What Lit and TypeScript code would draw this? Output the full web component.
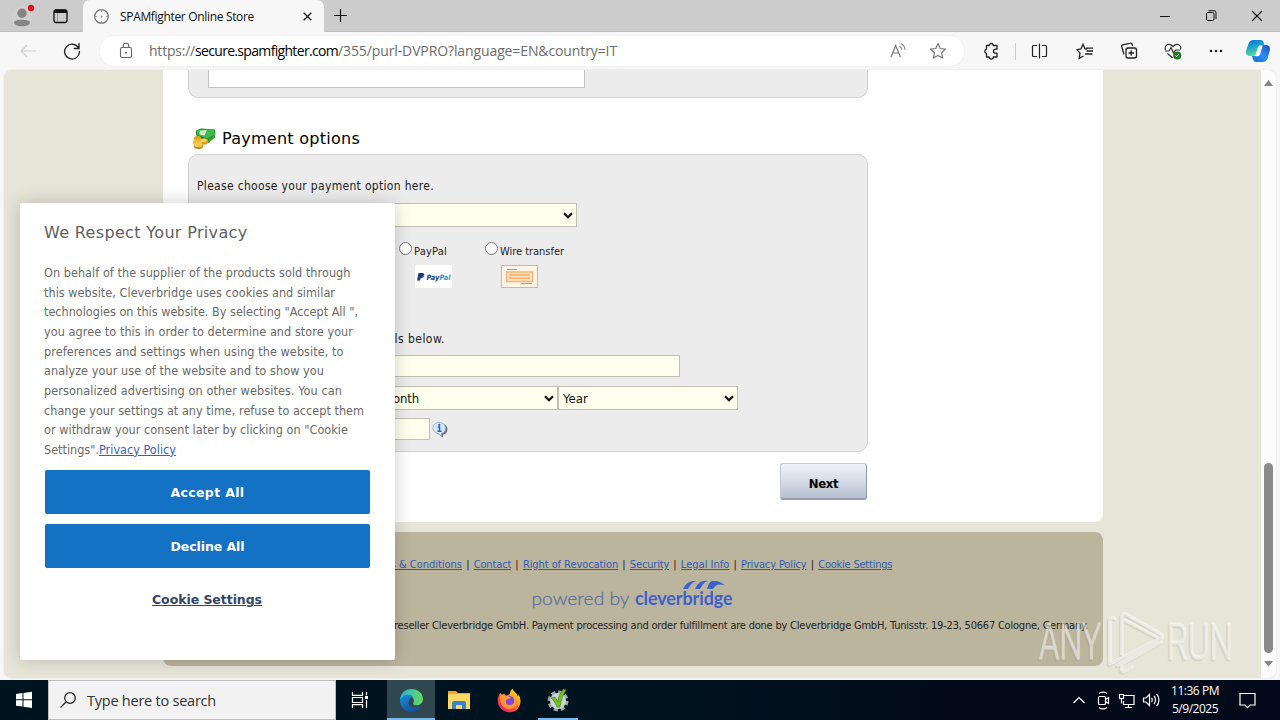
import { LitElement, html, css, svg } from "lit";
import { customElement, property } from "lit/decorators.js";

/** Single line of text whose tracking is adjusted to fill a given width. */
@customElement("fit-text")
class FitText extends LitElement {
  static styles = css`
    :host { display: inline-block; white-space: pre; flex: none; }
    .run { display: inline-block; }
    :host(.link) .run, :host(.under) .run { text-decoration: underline; }
  `;
  @property({ type: Number }) w = 0;
  @property() text = "";
  render() {
    return html`<span class="run">${this.text}</span>`;
  }
  updated() {
    const run = this.renderRoot.querySelector(".run") as HTMLElement;
    run.style.letterSpacing = "0px";
    const natural = run.getBoundingClientRect().width;
    run.style.letterSpacing = `${(this.w - natural) / this.text.length}px`;
    this.style.width = `${this.w}px`;
  }
}

const fit = (text: string, w: number, cls = "") => html`<fit-text class=${cls} .text=${text} .w=${w}></fit-text>`;

const chevron = html`<svg class="chev" width="10" height="7" viewBox="0 0 10 7"><path d="M1 1.2 5 5.2 9 1.2" fill="none" stroke="#111" stroke-width="2.200"/></svg>`;

@customElement("browser-chrome")
class BrowserChrome extends LitElement {
  static styles = css`
    :host { display: block; flex: none; background: #f7f7f7; font-family: "Open Sans", sans-serif; }
    svg { display: block; flex: none; }
    .tabs { display: flex; height: 32px; background: #ccc; }
    .lead { width: 83px; display: flex; box-sizing: border-box; padding-left: 10px; border-bottom: 1px solid #bdbdbd; border-bottom-right-radius: 4px; }
    .tab { width: 241px; height: 32px; box-sizing: border-box; background: #f7f7f7; border-radius: 7px 7px 0 0; display: flex; align-items: center; padding-left: 10px; font-size: 12px; color: #111; }
    .title { margin-left: 10px; width: 183px; }
    .rest { flex: 1; display: flex; border-bottom: 1px solid #bdbdbd; border-bottom-left-radius: 4px; box-sizing: border-box; }
    .plus { margin: 8px 0 0 9px; }
    .win { margin-left: auto; display: flex; gap: 30px; padding: 8px 15px 0 0; }
    .bar { height: 38px; display: flex; align-items: center; }
    .back { margin-left: 19px; }
    .reload { margin-left: 26px; }
    .pill { margin-left: 19px; width: 864px; height: 30px; border-radius: 15px; background: #fff; display: flex; align-items: center; color: #6c6c6c; font-size: 14px; box-shadow: 0 0 3px #ececec; }
    .lock { margin-left: 18px; }
    .url { margin-left: 15px; display: flex; align-items: center; width: 468px; line-height: 20px; }
    .host { color: #000; }
    .read { margin-left: 273px; }
    .star { margin-left: 22px; }
    .tools { margin-left: 19px; display: flex; align-items: center; }
    .sep { width: 1px; height: 17px; background: #ccc; margin: 0 15px; }
    .gap { margin-left: 26px; }
    .gap.first { margin-left: 28px; }
    .copilot { margin-left: 21px; }
  `;
  render() {
    return html`
      <div class="tabs">
        <div class="lead">
          <svg width="62" height="31" viewBox="0 0 62 31">
            <circle cx="12" cy="16" r="10.500" fill="#d2d0ce"/>
            <circle cx="12" cy="13.300" r="4.700" fill="#858585"/>
            <path d="M4 22.300c0-3.500 16-3.500 16 0 0 5.300-16 5.300-16 0Z" fill="#858585"/>
            <circle cx="21" cy="8" r="3.200" fill="#e3111b"/>
            <rect x="44" y="10" width="13" height="12.500" rx="2.200" fill="none" stroke="#111" stroke-width="1.300"/>
            <path d="M44 11.500a2 2 0 0 1 2-2h9a2 2 0 0 1 2 2V13H44Z" fill="#111"/>
            <path d="M47.500 13v9" stroke="#888" stroke-width=".7"/>
          </svg>
        </div>
        <div class="tab">
          <svg width="17" height="17" viewBox="0 0 17 17"><circle cx="8.500" cy="8.500" r="6.800" fill="#fafafa" stroke="#777" stroke-width="1.300"/><path d="M8.500 1v3M8.500 13v3M1 8.500h3M13 8.500h3" stroke="#999"/><circle cx="8.500" cy="8.500" r="1" fill="#888"/></svg>
          <div class="title">${fit("SPAMfighter Online Store", 134)}</div>
          <svg width="9" height="9" viewBox="0 0 9 9"><path d="m.7.7 7.600 7.600M8.300.7.700 8.300" stroke="#111" stroke-width="1.300"/></svg>
        </div>
        <div class="rest">
          <svg class="plus" width="15" height="15" viewBox="0 0 15 15"><path d="M7.500 1v13M1 7.500h13" stroke="#111" stroke-width="1.200"/></svg>
          <div class="win">
            <svg width="16" height="16" viewBox="0 0 16 16"><path d="M3 8.500h10" stroke="#111"/></svg>
            <svg width="16" height="16" viewBox="0 0 16 16"><rect x="3.500" y="4.500" width="7.500" height="8" rx="1.500" fill="none" stroke="#111"/><path d="M5.500 2.700H11a2 2 0 0 1 2 2V11" fill="none" stroke="#111"/></svg>
            <svg width="16" height="16" viewBox="0 0 16 16"><path d="m3 3 10 10M13 3 3 13" stroke="#111" stroke-width="1.100"/></svg>
          </div>
        </div>
      </div>
      <div class="bar">
        <svg class="back" width="18" height="14" viewBox="0 0 18 14"><path d="M17 7H2M8 1 2 7l6 6" fill="none" stroke="#cdcdcd" stroke-width="1.200"/></svg>
        <svg class="reload" width="18" height="18" viewBox="0 0 18 18"><path d="M15.600 6.200A7.400 7.400 0 1 0 16.400 9M16 1v5.500h-5.300" fill="none" stroke="#222" stroke-width="1.300"/></svg>
        <div class="pill">
          <svg class="lock" width="16" height="18" viewBox="0 0 16 18"><rect x="2.500" y="5.500" width="11" height="10" rx="1.500" fill="none" stroke="#666" stroke-width="1.100"/><path d="M5.200 5.500V4a2.800 2.800 0 0 1 5.600 0v1.500" fill="none" stroke="#666" stroke-width="1.100"/><circle cx="8" cy="10.700" r="1" fill="#555"/></svg>
          <div class="url">${fit("https://", 46)}${fit("secure.spamfighter.com", 143, "host")}${fit("/355/purl-DVPRO?language=EN&country=IT", 279)}</div>
          <svg class="read" width="17" height="16" viewBox="0 0 17 16"><path d="M1 14 5.700 2.500 10.400 14M2.700 10h6" fill="none" stroke="#777" stroke-width="1.200"/><path d="M9.500 3.200c1.600.8 2.200 2 2.200 3.600M11 .8c2.700 1.300 4 3.200 4 6" fill="none" stroke="#777" stroke-width="1.100"/></svg>
          <svg class="star" width="18" height="18" viewBox="0 0 18 18"><path d="m9 1.600 2.200 4.900 5.300.6-3.900 3.600 1 5.300L9 13.400 4.400 16l1-5.300-3.900-3.600 5.300-.6Z" fill="none" stroke="#777" stroke-width="1.200" stroke-linejoin="round"/></svg>
        </div>
        <div class="tools">
          <svg width="17" height="18" viewBox="0 0 17 18"><path d="M6.200 3.500a2 2 0 0 1 4 0H14v3.700h-1.500a2 2 0 0 0 0 4H14V15h-3.700a2 2 0 0 1-4.200 0H3.500v-3.600a2.200 2.200 0 0 1 0-4.300V3.500Z" fill="none" stroke="#222" stroke-width="1.300" stroke-linejoin="round"/></svg>
          <div class="sep"></div>
          <svg width="17" height="16" viewBox="0 0 17 16"><path d="M6 2.500H2.500a1 1 0 0 0-1 1v9a1 1 0 0 0 1 1H6M11 2.500h3.500a1 1 0 0 1 1 1v9a1 1 0 0 1-1 1H11M8.500.500v15" fill="none" stroke="#222" stroke-width="1.200"/></svg>
          <svg class="gap first" width="18" height="17" viewBox="0 0 18 17"><path d="M11.200 6.200 9 6 7 1.300 4.900 6 1 6.700l3 3.400-.8 5.200L7.500 13M10.500 8H17M10 5.200h7M9 11h7.500" fill="none" stroke="#222" stroke-width="1.300"/></svg>
          <svg class="gap" width="18" height="18" viewBox="0 0 18 18"><rect x="6" y="6" width="10.500" height="10" rx="2" fill="none" stroke="#222" stroke-width="1.300"/><path d="M11.200 8.300v5.500M8.500 11H14M4 12.500 1.800 4.800a1.500 1.500 0 0 1 1-2l7.500-1.600a1.500 1.500 0 0 1 1.800 1l.5 2" fill="none" stroke="#222" stroke-width="1.300"/></svg>
          <svg class="gap" width="18" height="18" viewBox="0 0 18 18"><path d="M1.500 8C.500 5 2 2.300 5 2.300c2 0 3 1 4 2.200 1-1.200 2-2.200 4-2.200 3 0 4.500 2.700 3.500 5.200M3.500 11.500 8.500 16M1 9h4l2-3.500 2.500 5.500L11.500 8H16" fill="none" stroke="#333" stroke-width="1.200"/><circle cx="13.200" cy="13.400" r="4" fill="#1d7a1d"/><path d="m11.500 13.500 1.200 1.200 2.200-2.700" fill="none" stroke="#fff"/></svg>
          <svg class="gap" width="16" height="16" viewBox="0 0 16 16"><circle cx="3" cy="8" r="1.300" fill="#222"/><circle cx="8" cy="8" r="1.300" fill="#222"/><circle cx="13" cy="8" r="1.300" fill="#222"/></svg>
          <svg class="copilot" width="26" height="24" viewBox="0 0 26 24">
            <defs><linearGradient id="a" x1="0" y1="0" x2=".3" y2="1"><stop offset="0" stop-color="#0b6fd0"/><stop offset=".5" stop-color="#1aa6cf"/><stop offset="1" stop-color="#5fdc90"/></linearGradient><linearGradient id="b" x1="1" y1="0" x2="0" y2="1"><stop offset="0" stop-color="#1c50b8"/><stop offset=".5" stop-color="#2f8df2"/><stop offset="1" stop-color="#0d6fe0"/></linearGradient></defs>
            <path d="M15 6h6c3.500 0 4.500 3 3.800 5.500l-1.800 6.500c-1 3.500-2.500 5-5.500 5h-6c-2.500 0-3.500-2-4.500-6h4.500c1.500 0 2-1 2.300-2.500Z" fill="url(#b)"/>
            <path d="M8.500 1h7c2.500 0 3.200 2 4 5.500h-4c-2 0-2.400 1-3 3l-1.800 5.500c-.6 1.700-1.200 2-3.200 2H5c-3.500 0-4.500-2.500-3.800-5.500l2-6C4.200 2.500 5.500 1 8.500 1Z" fill="url(#a)"/>
            <path d="M15.500 6.500c1-.3 2.300-.2 1.800 1.500l-2 7c-.6 2-2 2.500-4.800 2.200.7-.6 1.200-2 1.700-3.700l1.300-4.200c.4-1.500.9-2.500 2-2.800Z" fill="#f2f8ff"/>
          </svg>
        </div>
      </div>`;
  }
}

@customElement("store-page")
class StorePage extends LitElement {
  static styles = css`
    :host { display: flex; flex: none; height: 608px; margin: 0 4px; background: #e7e5d8; border-radius: 8px; overflow: hidden; font-family: "DejaVu Sans Condensed", "DejaVu Sans", sans-serif; font-stretch: condensed; font-size: 12px; color: #222; box-shadow: 0 0 2px #ddd; }
    svg { display: block; flex: none; }
    .scroller { flex: 1; padding-left: 159px; }
    .sheet { width: 940px; height: 452px; background: #fff; border-radius: 0 0 8px 8px; box-sizing: border-box; padding-left: 25px; }
    .box { width: 680px; box-sizing: border-box; background: #ececec; border: 1px solid #d2d2d2; border-radius: 10px; padding-left: 8px; }
    .first { height: 28px; border-top: 0; border-radius: 0 0 10px 10px; padding-left: 19px; }
    .area { width: 377px; height: 18px; box-sizing: border-box; background: #fff; border: 1px solid #c2c2c2; border-top: 0; }
    .heading { display: flex; align-items: center; height: 24px; margin: 28px 0 4px 4px; font: 16px "DejaVu Sans", sans-serif; color: #000; gap: 6px; }
    .main { height: 298px; overflow: hidden; }
    .line { height: 20px; line-height: 20px; }
    .intro { margin-top: 21px; }
    .field { box-sizing: border-box; background: #ffffee; border: 1px solid #c0c0b6; display: flex; align-items: center; justify-content: space-between; padding: 0 3px 0 4px; color: #111; font-size: 13px; }
    .chooser { width: 380px; height: 24px; margin-top: 7px; }
    .options { display: flex; padding-left: 202px; margin-top: 13px; }
    .option { width: 86px; }
    .pick { display: flex; height: 22px; font-size: 11px; line-height: 23px; gap: 2px; }
    .radio { width: 13px; height: 13px; box-sizing: border-box; border: 1px solid #767676; border-radius: 50%; background: #fff; margin-top: 2px; }
    .brand { margin: 3px 0 0 16px; }
    .details { margin-top: 39px; display: flex; width: 248px; justify-content: flex-end; line-height: 22px; }
    .card { width: 483px; height: 22px; margin-top: 7px; }
    .dates { display: flex; margin: 9px 0 0 181px; }
    .date { width: 180px; height: 24px; }
    .cvv { display: flex; align-items: center; margin-top: 8px; gap: 2px; }
    .code { width: 233px; height: 22px; }
    .next { margin: 11px 0 0 592px; width: 87px; height: 37px; box-sizing: border-box; border: 1px solid #c3c8d3; border-bottom: 2px solid #949cab; border-right-color: #9199a6; border-radius: 3px; background: linear-gradient(#f0f2f8, #d3d9e4 55%, #b5bfce); display: flex; justify-content: center; align-items: center; font-size: 13px; font-weight: bold; color: #000; padding-top: 4px; }
    .foot { width: 940px; height: 134px; margin-top: 10px; border-radius: 8px; background: #bcb59d; overflow: hidden; }
    .links { display: flex; font-size: 11px; line-height: 16px; margin: 25px 0 0 204px; }
    .link { color: #2c5bb4; }
    .bar { width: 11.700px; text-align: center; color: #222; }
    .logo { margin: 3px 0 0 363px; }
    .legal { font-size: 11px; line-height: 16px; margin: 6px 0 0 231px; }
    .scroll { width: 15px; background: #fcfcfc; display: flex; flex-direction: column; align-items: center; margin-left: auto; padding-top: 9px; box-sizing: border-box; }
    .thumb { width: 9px; height: 190px; border-radius: 5px; background: #8a8a8a; margin: 376px 0 7px; }
  `;
  render() {
    const links: [string, number][] = [["Terms & Conditions", 95], ["Contact", 37.500], ["Right of Revocation", 95.300], ["Security", 39.300], ["Legal Info", 48.500], ["Privacy Policy", 65.500], ["Cookie Settings", 74]];
    return html`
      <div class="scroller">
        <div class="sheet">
          <div class="box first"><div class="area"></div></div>
          <div class="heading">
            <svg width="24" height="23" viewBox="0 0 24 23">
              <path d="M4 3.500 9 1.500 23 2.500 23.500 7l-6.500 9-5-2-8-6Z" fill="#178b2b"/><path d="M5 3 22 2.500l1 5-8 4-10-4Z" fill="#3ebd4a"/><path d="m8 3.500 7-.5-2.500 5.500-5-1Z" fill="#d6f3d0"/><path d="m14 13 9-5v2.500l-7 5.500Z" fill="#2fa32f"/>
              <ellipse cx="5.500" cy="11.500" rx="3.500" ry="2.700" fill="#d9a428"/><ellipse cx="12" cy="14.500" rx="4.200" ry="3.300" fill="#dca021"/><ellipse cx="5.500" cy="15.500" rx="4.500" ry="3.500" fill="#efbd34"/><ellipse cx="6.500" cy="19" rx="4.500" ry="3" fill="#bd7f17"/><ellipse cx="6.200" cy="17.700" rx="4.300" ry="2.500" fill="#f3ca55"/><ellipse cx="11.500" cy="13.200" rx="3" ry="1.500" fill="#f6d869"/>
            </svg>
            ${fit("Payment options", 138)}
          </div>
          <div class="box main">
            <div class="line intro">${fit("Please choose your payment option here.", 237)}</div>
            <div class="field chooser"><span></span>${chevron}</div>
            <div class="options">
              <div class="option">
                <div class="pick"><span class="radio"></span>${fit("PayPal", 33)}</div>
                <svg class="brand" width="37" height="24" viewBox="0 0 37 24"><rect width="37" height="23" fill="#fff"/><path d="M3.500 8h3.800c2 0 2.400 1.500 1.800 3-.5 1.600-1.600 2-3.500 2L5 15.500H2Z" fill="#1c3a7c"/><path d="M8.800 9.500c.8 2.500-.8 4-3.300 4L5 16.500h-.800" fill="#2a93d0"/><text x="11.500" y="14.800" font-family="DejaVu Sans" font-size="7.200" font-weight="bold" font-style="italic" fill="#1c3a7c" textLength="24" lengthAdjust="spacingAndGlyphs">Pay<tspan fill="#2a93d0">Pal</tspan></text></svg>
              </div>
              <div class="option">
                <div class="pick"><span class="radio"></span>${fit("Wire transfer", 64)}</div>
                <svg class="brand" width="37" height="24" viewBox="0 0 37 24"><rect x=".5" y=".5" width="36" height="22" fill="#fff4e6" stroke="#bbb"/><path d="M6 4.500h10M20 18.500h11" stroke="#a89f8f"/><path d="M5.700 7h26v9.500h-26Z" fill="#ffe3c2" stroke="#fab574" stroke-width="1.500"/><path d="M8 10h21M8 13.300h21" stroke="#f9ae68" stroke-width="1.500"/></svg>
              </div>
            </div>
            <div class="line details">${fit("details below.", 80)}</div>
            <div class="field card"></div>
            <div class="dates">
              <div class="field date">${fit("Month", 36)}${chevron}</div>
              <div class="field date">${fit("Year", 25)}${chevron}</div>
            </div>
            <div class="cvv">
              <div class="field code"></div>
              <svg width="16" height="17" viewBox="0 0 16 17"><path d="M4 3.500C8 .500 16 3 15.500 8.500c-.2 3-2 4.500-4 5l-1 3-3-3C2 13 1 6 4 3.500Z" fill="#6d7180"/><path d="M7 1.500c8 0 8.500 9.500 2.500 11L9 15l-3-2.500C-1.500 11-.5 1.500 7 1.500Z" fill="#d9e9fb" stroke="#8fa6cb" stroke-width=".8"/><path d="M5.700 6H7.500v4M5.500 10.300h4" fill="none" stroke="#1b63bb" stroke-width="1.500"/><circle cx="7.300" cy="3.900" r="1.100" fill="#1b63bb"/></svg>
            </div>
          </div>
          <div class="next">${fit("Next", 29.500)}</div>
        </div>
        <div class="foot">
          <div class="links">${links.map(([t, w], i) => html`${i ? html`<span class="bar">|</span>` : ""}${fit(t, w, "link")}`)}</div>
          <svg class="logo" width="214" height="36" viewBox="-3 -3 214 36">
            <g font-family="Lato" font-size="18.500"><text x="2.500" y="26" font-weight="300" fill="#5d739e" stroke="#5d739e" stroke-width=".3" textLength="98" lengthAdjust="spacingAndGlyphs">powered by</text>
            <text x="106" y="26" font-weight="700" fill="#3c60cc" textLength="97.500" lengthAdjust="spacingAndGlyphs">cleverbridge</text></g>
            <g fill="#3c60cc"><path d="M154 10c3-6 7-8.500 14-8-5 1-7 4-9 8Z"/><path d="M166 10c3-6 6-9 13-8-4 1-6 4-8 8Z"/><path d="M178 10c2-6 3-8.500 7-8 5 0 8 2 11 4.500-6-2-9-1.500-12 3.500Z"/></g>
          </svg>
          <div class="legal">${fit("reseller Cleverbridge GmbH. Payment processing and order fulfillment are done by Cleverbridge GmbH, Tunisstr. 19-23, 50667 Cologne, Germany.", 694)}</div>
        </div>
      </div>
      <div class="scroll">
        <svg width="9" height="8" viewBox="0 0 9 8"><path d="M4.500 1 9 7H0Z" fill="#858585"/></svg>
        <div class="thumb"></div>
        <svg width="9" height="8" viewBox="0 0 9 8"><path d="M4.500 6.500 9 1H0Z" fill="#858585"/></svg>
      </div>`;
  }
}

@customElement("cookie-banner")
class CookieBanner extends LitElement {
  static styles = css`
    :host { position: absolute; left: 20px; top: 203px; width: 375px; height: 457px; box-sizing: border-box; padding: 19px 25px 0 24px; background: #fff; border-radius: 2px; box-shadow: 0 0 18px rgba(0, 0, 0, 0.2); font-family: "DejaVu Sans Condensed", "DejaVu Sans", sans-serif; font-stretch: condensed; color: #696969; }
    .title { font: 16px/22px "DejaVu Sans", sans-serif; color: #606060; }
    .copy { margin-top: 19px; font-size: 12.500px; }
    .row { height: 19.670px; line-height: 19.670px; display: flex; }
    .link { color: #3860be; }
    .btn { height: 44px; box-sizing: border-box; padding-top: 1px; margin: 0 0 10px 1px; border-radius: 2px; background: #1472c4; color: #fff; display: flex; align-items: center; justify-content: center; font: bold 12.500px "DejaVu Sans", sans-serif; }
    .accept { margin-top: 10px; }
    .settings { display: flex; justify-content: center; font: bold 12.500px/20px "DejaVu Sans", sans-serif; color: #32466b; margin-top: 22px; }
  `;
  render() {
    const rows: [string, number][] = [
      ["On behalf of the supplier of the products sold through", 306.500],
      ["this website, Cleverbridge uses cookies and similar", 291],
      ["technologies on this website. By selecting \"Accept All \",", 314],
      ["you agree to this in order to determine and store your", 309],
      ["preferences and settings when using the website, to", 299.500],
      ["analyze your use of the website and to show you", 280],
      ["personalized advertising on other websites. You can", 298],
      ["change your settings at any time, refuse to accept them", 320],
      ["or withdraw your consent later by clicking on \"Cookie", 304],
    ];
    return html`
      <div class="title">${fit("We Respect Your Privacy", 203.500)}</div>
      <div class="copy">
        ${rows.map(([t, w]) => html`<div class="row">${fit(t, w)}</div>`)}
        <div class="row">${fit("Settings\".", 55)}${fit("Privacy Policy", 77, "link")}</div>
      </div>
      <div class="btn accept">${fit("Accept All", 74)}</div>
      <div class="btn">${fit("Decline All", 74)}</div>
      <div class="settings">${fit("Cookie Settings", 110, "under")}</div>`;
  }
}

@customElement("task-bar")
class TaskBar extends LitElement {
  static styles = css`
    :host { display: flex; flex: none; height: 40px; margin-top: auto; background: linear-gradient(90deg, #00141f, #00131f 50%, #020a1a 75%, #040a1b); font-family: "Open Sans", sans-serif; color: #fff; }
    svg { display: block; flex: none; }
    .start { width: 48px; display: flex; align-items: center; justify-content: center; }
    .search { width: 288px; box-sizing: border-box; background: #f2f2f2; border: 1px solid #bdbdbd; display: flex; align-items: center; padding-left: 10px; gap: 10px; color: #333; font-size: 14.500px; }
    .app { width: 48px; height: 40px; box-sizing: border-box; display: flex; align-items: center; justify-content: center; }
    .view { width: 51px; padding-right: 3px; }
    .active { background: #30474f; border-bottom: 2px solid #76b9ed; padding-top: 2px; }
    .fox { margin-left: 2px; }
    .running { width: 40px; margin-left: 5px; border-bottom: 2px solid #76b9ed; padding-top: 2px; }
    .tray { margin-left: auto; display: flex; align-items: center; }
    .clock { width: 50px; margin-left: 8px; display: flex; flex-direction: column; align-items: center; font-size: 12px; line-height: 18px; padding-bottom: 1px; }
    .note { margin: 0 24px 0 19px; }
  `;
  render() {
    return html`
      <div class="start"><svg width="18" height="18" viewBox="0 0 18 18"><path d="m1 3 6.500-.9v6.200H1ZM8.500 2 17 .8v7.500H8.500ZM1 9.300h6.500v6.200L1 14.700ZM8.500 9.300H17V17l-8.500-1.300Z" fill="#fff"/></svg></div>
      <div class="search"><svg width="18" height="18" viewBox="0 0 18 18"><circle cx="11" cy="7" r="5.300" fill="none" stroke="#222" stroke-width="1.300"/><path d="M7 11 1.500 16.500" stroke="#222" stroke-width="1.300"/></svg>${fit("Type here to search", 129)}</div>
      <div class="app view"><svg width="18" height="18" viewBox="0 0 18 18"><path d="M1.500 1v3.300h10V1M1.500 17v-3.300h10V17M1.500 6.500h10v5h-10ZM15.500 1v3.300M15.500 9v8" fill="none" stroke="#fff" stroke-width="1.200"/><rect x="14" y="5" width="3" height="3" fill="#fff"/></svg></div>
      <div class="app active">
        <svg width="25" height="25" viewBox="0 0 26 26"><defs><linearGradient id="e1" x1="0" x2="1"><stop offset="0" stop-color="#2aaee4"/><stop offset="1" stop-color="#65dc58"/></linearGradient><linearGradient id="e2" x1="0" y1="0" x2=".6" y2="1"><stop offset="0" stop-color="#168fd7"/><stop offset="1" stop-color="#164f9e"/></linearGradient></defs>
          <path d="M1 13C1 5.500 6.500 1 13 1c7 0 12 5 12 10.500 0 4-3 6.500-6.500 6.500-3 0-4.500-1-3.500-2.700C16.500 12 14.500 9 10.500 9 6 9 2 11 1 13Z" fill="url(#e1)"/>
          <path d="M1 13c1-4 5-6 9-6 2.500 0 5 2 5.500 4-1.500-2-5.500-1-5.500 4 0 5 6 7.500 13.500 4C21 23.500 17 25 13 25 6 25 1 19.500 1 13Z" fill="url(#e2)"/></svg>
      </div>
      <div class="app"><svg width="24" height="22" viewBox="0 0 24 22"><path d="M1 2h8l2 2h12v4H1Z" fill="#eea52a"/><path d="M1 5h22v15H1Z" fill="#ffd765"/><path d="M5 20v-6a2 2 0 0 1 2-2h10a2 2 0 0 1 2 2v6h-4v-4H9v4Z" fill="#3486c7"/></svg></div>
      <div class="app fox"><svg width="24" height="25" viewBox="0 0 24 25"><defs><linearGradient id="f1" x1="1" y1="0" x2=".2" y2="1"><stop offset="0" stop-color="#fff04c"/><stop offset=".35" stop-color="#ffad27"/><stop offset=".7" stop-color="#ff473e"/><stop offset="1" stop-color="#ea1c76"/></linearGradient></defs>
        <path d="M3.500 5 5 7l2-1.500L9 8l4-2c0-2 1-4 2.500-5.500.5 3 4.500 4 5.500 8l.5-2c3 5 2.500 10-.5 14-4 5-12.500 5-17 0C-.5 15.500 0 9 3.500 5Z" fill="url(#f1)"/><circle cx="12.200" cy="13" r="5.200" fill="#8145da"/><path d="M3.500 7c3.500-1 5 1 8.500 1.500l2 1.500c-2 .5-3 1.500-4.500 1.500C8 14 9 17 12 17c4 0 6-2 5.500-6C21 17 17 21 12 21 6 21 2 15 3.500 7Z" fill="#ff9830"/></svg></div>
      <div class="app running"><svg width="24" height="24" viewBox="0 0 24 24"><circle cx="12" cy="13" r="8" fill="none" stroke="#9ba7a9" stroke-width="5" stroke-dasharray="3.700 2.583"/><circle cx="12" cy="13" r="8" fill="#cdd4d4"/><path d="m5 10 4-1 3 5c0-5 2-9 5.500-13L20 2c-3 5-5 10-6 17h-3C9.500 15 7.500 12 5 10Z" fill="#72c31c" stroke="#39701b" stroke-width=".6"/></svg></div>
      <div class="tray">
        <svg width="90" height="24" viewBox="0 0 90 24" fill="none" stroke="#fff" stroke-width="1.200">
          <path d="m1.500 15 5.500-5.500 5.500 5.500"/>
          <path d="M27.500 8.500h5a1 1 0 0 1 1 1v6a1 1 0 0 1-1 1h-5a1 1 0 0 1-1-1v-6a1 1 0 0 1 1-1Zm6 3 3-2v6l-3-2M27 5.500c2-1.800 6-1.800 8 0M27 19.500c2 1.800 6 1.800 8 0"/>
          <path d="M51.500 7.500H62v9H51.500V13M56.500 17v2.500M53 19.500h7M47.500 6.500h4v4h-4ZM49.500 10.500v5"/>
          <path d="M71.500 10h2.500l3.500-3.500v11L74 14h-2.500ZM79.500 10c1 1 1 3 0 4M82 8c2 2 2 6 0 8M84.500 6c3.300 3 3.300 9 0 12"/>
        </svg>
        <div class="clock">${fit("11:36 PM", 48)}${fit("5/9/2025", 46)}</div>
        <svg class="note" width="17" height="17" viewBox="0 0 17 17"><path d="M1 1.500h15V13h-5l-2.500 2.700L6 13H1Z" fill="none" stroke="#fff" stroke-width="1.200"/></svg>
      </div>`;
  }
}

@customElement("app-root")
class AppRoot extends LitElement {
  static styles = css`
    :host { display: flex; flex-direction: column; position: relative; width: 1280px; height: 720px; overflow: hidden; background: #f7f7f7; }
    .mark { position: absolute; left: 1034px; top: 600px; }
  `;
  render() {
    return html`
      <browser-chrome></browser-chrome>
      <store-page></store-page>
      <task-bar></task-bar>
      <cookie-banner></cookie-banner>
      <svg class="mark" width="220" height="80" viewBox="0 -4 220 80">
        ${["#8f8a78", "#ffffff"].map((c, i) => svg`<g opacity=${i ? 0.5 : 0.18} transform=${i ? "" : "translate(-1.500 1.500)"}>
          <g font-family="Roboto" font-size="50" font-weight="300" fill=${c} stroke=${c} stroke-width="1.200">
            <text x="5" y="55" textLength="62" lengthAdjust="spacingAndGlyphs">ANY</text>
            <text x="133" y="55" textLength="66" lengthAdjust="spacingAndGlyphs">RUN</text>
          </g>
          <path d="M81 14.500a3 3 0 0 0-5 2V60l4-2 43-22M121 39 84 61M88 50V12a3 3 0 0 1 4-2l35 20a3 3 0 0 1 0 5L91 16M127 38 88 60v6a3 3 0 0 0 4 1l6-4" fill="none" stroke=${c} stroke-width="3.600" stroke-linejoin="round" stroke-linecap="round"/>
        </g>`)}
      </svg>`;
  }
}
